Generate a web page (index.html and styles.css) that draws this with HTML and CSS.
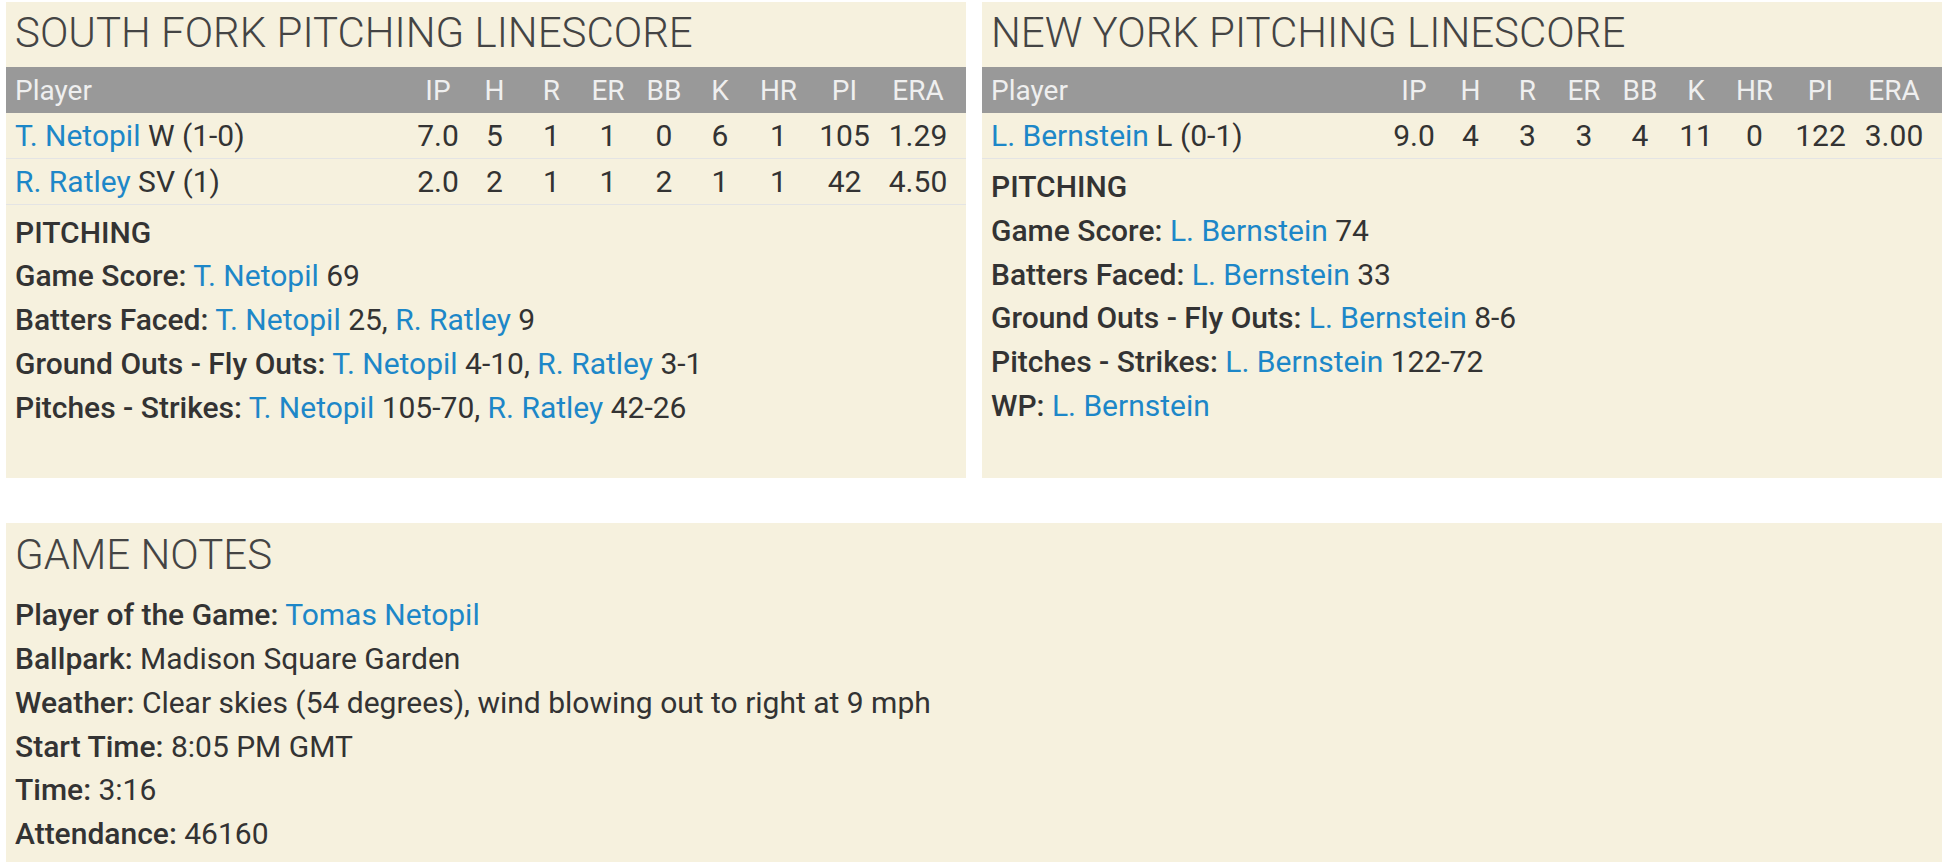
FILE: index.html
```html
<!DOCTYPE html>
<html lang="en">
<head>
<meta charset="utf-8">
<title>Pitching Linescore</title>
<link rel="stylesheet" href="styles.css">
</head>
<body>
<div class="page">
  <div class="top-row">
    <section class="panel">
      <h2 class="panel-title">SOUTH FORK PITCHING LINESCORE</h2>
      <table class="linescore">
        <colgroup>
          <col class="c-player"><col class="c-ip"><col class="c-h"><col class="c-r"><col class="c-er"><col class="c-bb"><col class="c-k"><col class="c-hr"><col class="c-pi"><col class="c-era">
        </colgroup>
        <thead>
          <tr><th class="player">Player</th><th>IP</th><th>H</th><th>R</th><th>ER</th><th>BB</th><th>K</th><th>HR</th><th>PI</th><th class="last">ERA</th></tr>
        </thead>
        <tbody>
          <tr><td class="player"><a href="#">T. Netopil</a> W (1-0)</td><td>7.0</td><td>5</td><td>1</td><td>1</td><td>0</td><td>6</td><td>1</td><td>105</td><td class="last">1.29</td></tr>
          <tr><td class="player"><a href="#">R. Ratley</a> SV (1)</td><td>2.0</td><td>2</td><td>1</td><td>1</td><td>2</td><td>1</td><td>1</td><td>42</td><td class="last">4.50</td></tr>
        </tbody>
      </table>
      <div class="notes">
        <div class="notes-head">PITCHING</div>
        <div class="line"><b>Game Score:</b> <a href="#">T. Netopil</a> 69</div>
        <div class="line"><b>Batters Faced:</b> <a href="#">T. Netopil</a> 25, <a href="#">R. Ratley</a> 9</div>
        <div class="line"><b>Ground Outs - Fly Outs:</b> <a href="#">T. Netopil</a> 4-10, <a href="#">R. Ratley</a> 3-1</div>
        <div class="line"><b>Pitches - Strikes:</b> <a href="#">T. Netopil</a> 105-70, <a href="#">R. Ratley</a> 42-26</div>
      </div>
    </section>
    <section class="panel">
      <h2 class="panel-title">NEW YORK PITCHING LINESCORE</h2>
      <table class="linescore">
        <colgroup>
          <col class="c-player"><col class="c-ip"><col class="c-h"><col class="c-r"><col class="c-er"><col class="c-bb"><col class="c-k"><col class="c-hr"><col class="c-pi"><col class="c-era">
        </colgroup>
        <thead>
          <tr><th class="player">Player</th><th>IP</th><th>H</th><th>R</th><th>ER</th><th>BB</th><th>K</th><th>HR</th><th>PI</th><th class="last">ERA</th></tr>
        </thead>
        <tbody>
          <tr><td class="player"><a href="#">L. Bernstein</a> L (0-1)</td><td>9.0</td><td>4</td><td>3</td><td>3</td><td>4</td><td>11</td><td>0</td><td>122</td><td class="last">3.00</td></tr>
        </tbody>
      </table>
      <div class="notes">
        <div class="notes-head">PITCHING</div>
        <div class="line"><b>Game Score:</b> <a href="#">L. Bernstein</a> 74</div>
        <div class="line"><b>Batters Faced:</b> <a href="#">L. Bernstein</a> 33</div>
        <div class="line"><b>Ground Outs - Fly Outs:</b> <a href="#">L. Bernstein</a> 8-6</div>
        <div class="line"><b>Pitches - Strikes:</b> <a href="#">L. Bernstein</a> 122-72</div>
        <div class="line"><b>WP:</b> <a href="#">L. Bernstein</a></div>
      </div>
    </section>
  </div>
  <section class="panel game-notes">
    <h2 class="panel-title">GAME NOTES</h2>
    <div class="notes gn-body">
      <div class="line"><b>Player of the Game:</b> <a href="#">Tomas Netopil</a></div>
      <div class="line"><b>Ballpark:</b> Madison Square Garden</div>
      <div class="line"><b>Weather:</b> Clear skies (54 degrees), wind blowing out to right at 9 mph</div>
      <div class="line"><b>Start Time:</b> 8:05 PM GMT</div>
      <div class="line"><b>Time:</b> 3:16</div>
      <div class="line"><b>Attendance:</b> 46160</div>
    </div>
  </section>
</div>
</body>
</html>
```

FILE: styles.css
```css
* { box-sizing: border-box; }

body {
  margin: 0;
  background: #ffffff;
  font-family: Roboto, "Liberation Sans", sans-serif;
  color: #333333;
}

a {
  color: #1d87c8;
  text-decoration: none;
}

.page {
  padding: 2px 2px 0 6px;
}

.top-row {
  display: flex;
  gap: 16px;
}

.top-row > .panel {
  flex: 1 1 0;
  padding-bottom: 49px;
}

.panel {
  background: #f6f1de;
}

.panel-title {
  margin: 0;
  padding: 6px 9px 10px;
  font-size: 42px;
  line-height: 49px;
  font-weight: 300;
  color: #444444;
}

.linescore {
  width: 100%;
  border-collapse: collapse;
  table-layout: fixed;
  font-size: 30px;
}

.c-ip { width: 56px; }
.c-h { width: 57px; }
.c-r { width: 57px; }
.c-er { width: 56px; }
.c-bb { width: 56px; }
.c-k { width: 56px; }
.c-hr { width: 61px; }
.c-pi { width: 71px; }
.c-era { width: 86px; }

.linescore th {
  height: 46px;
  padding: 0;
  background: #999999;
  color: #efefef;
  font-weight: 400;
  font-size: 28px;
  text-align: center;
  white-space: nowrap;
}

.linescore td {
  height: 45.5px;
  padding: 0;
  text-align: center;
  border-bottom: 1px solid #e4e4e4;
  white-space: nowrap;
}

.linescore .player {
  text-align: left;
  padding-left: 9px;
}

.linescore .last {
  padding-right: 10px;
}

.notes {
  padding: 6px 9px 0;
  font-size: 30px;
  line-height: 43.75px;
}

.notes-head {
  font-weight: 500;
}

.notes b {
  font-weight: 500;
}

.game-notes {
  margin-top: 45px;
  padding-top: 1px;
  padding-bottom: 6px;
}

.gn-body {
  padding-top: 4px;
}
```
